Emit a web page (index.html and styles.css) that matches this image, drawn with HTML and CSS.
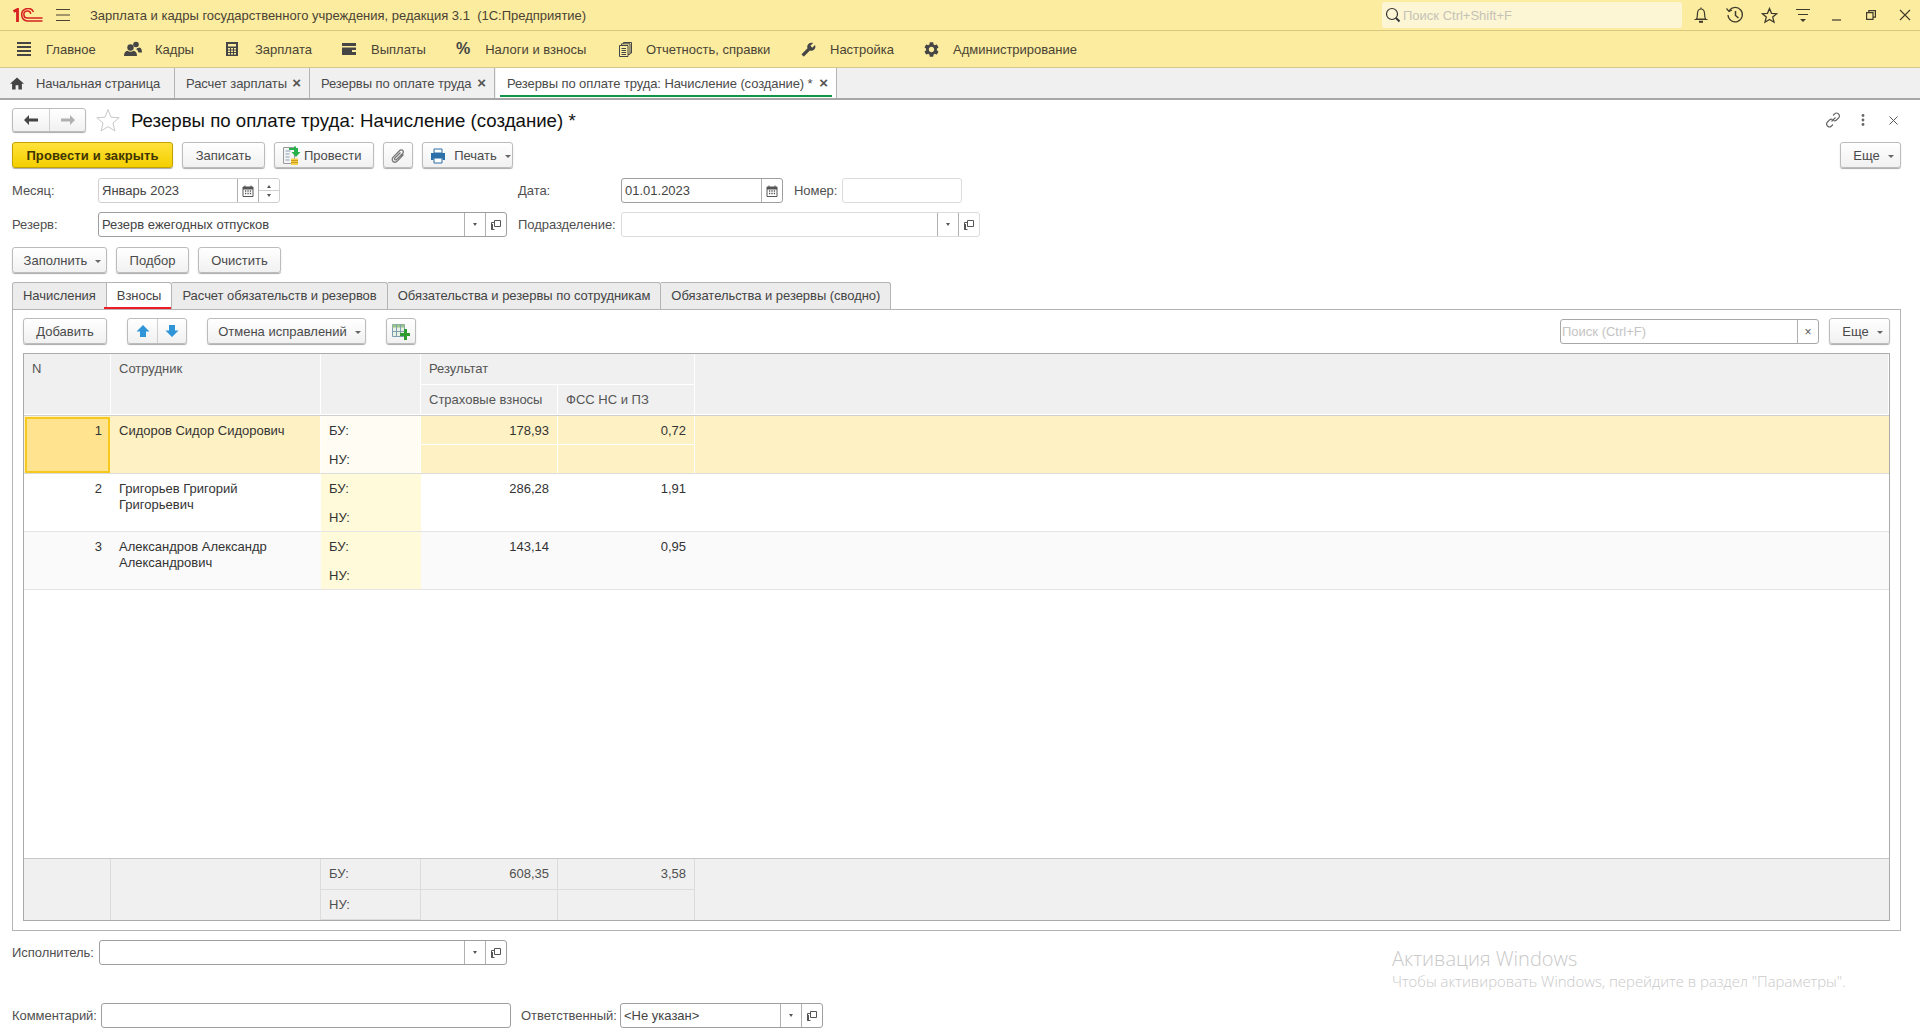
FILE: index.html
```html
<!DOCTYPE html>
<html lang="ru">
<head>
<meta charset="utf-8">
<title>Резервы по оплате труда</title>
<link rel="stylesheet" href="styles.css">
</head>
<body>
<svg class="defs" width="0" height="0">
  <symbol id="open" viewBox="0 0 12 12"><path d="M4.5 1.500h6v6h-6zM4.500 3.500H1.500v7h1V5M1.500 10.500h3" fill="none" stroke="#555" stroke-width="1"/></symbol>
  <symbol id="cal" viewBox="0 0 12 12"><path d="M1 2h10v9.500H1z" fill="#fff" stroke="#555"/><path d="M1 2h10v2.500H1z" fill="#555"/><path d="M3 0.500v2M9 0.500v2" stroke="#555"/><path d="M3 6h1.300M5.400 6h1.300M7.800 6h1.300M3 8.500h1.300M5.400 8.500h1.300M7.800 8.500h1.300" stroke="#555" stroke-width="1.300"/></symbol>
</svg>

<header class="titlebar">
  <svg class="logo" width="30" height="14" viewBox="0 0 30 14" fill="none" stroke="#d7201f"><path d="M0.500 3.500 4.500 1.500V14" stroke-width="2.800"/><path d="M20.500 4A6.200 6.200 0 1 0 14.500 12.900H29.500" stroke-width="1.500"/><path d="M17.800 5.800A3.500 3.500 0 1 0 14.500 10H29.500" stroke-width="1.500"/></svg>
  <svg class="burger" width="14" height="12" viewBox="0 0 14 12" stroke="#4a4334"><path d="M0 .5h14M0 6h14M0 11.500h14"/></svg>
  <span class="apptitle">Зарплата и кадры государственного учреждения, редакция 3.1  (1С:Предприятие)</span>
  <div class="globalsearch">
    <svg width="16" height="16" viewBox="0 0 16 16" fill="none" stroke="#333"><circle cx="7" cy="7" r="5.500" stroke-width="1.200"/><path d="M11 11l3.500 3.500" stroke-width="2"/></svg>
    <span>Поиск Ctrl+Shift+F</span>
  </div>
  <div class="sysicons">
    <svg width="16" height="18" viewBox="0 0 16 18" fill="none" stroke="#3f3a2b" stroke-width="1.200"><path d="M8 1.500v1.500M3.500 13c1.200-2 .8-4 1-6S6 3 8 3s3.300 2 3.500 4 0 4 1 6zM1.500 13.500h13"/><path d="M6 15.800h4" stroke-width="2"/></svg>
    <svg width="18" height="18" viewBox="0 0 18 18" fill="none" stroke="#3f3a2b" stroke-width="1.200"><path d="M3 5A7.200 7.200 0 1 1 2 9"/><path d="M.500 2.500 3 5.500 6 4"/><path d="M9.500 5v4.500l3 2.500" stroke-width="1.500"/></svg>
    <svg width="17" height="17" viewBox="0 0 17 17" fill="none" stroke="#3f3a2b" stroke-width="1.300"><path d="M8.500 1.500l2 4.800 5.200.4-4 3.400 1.300 5.100-4.500-2.800L4 15.200l1.300-5.100-4-3.400 5.200-.4z"/></svg>
    <svg width="16" height="16" viewBox="0 0 16 16" fill="none" stroke="#3f3a2b"><path d="M1 2.500h14M3 7.500h10"/><path d="M5 12h6l-3 3z" fill="#3f3a2b" stroke="none"/></svg>
    <svg width="10" height="16" viewBox="0 0 10 16" stroke="#3f3a2b"><path d="M0 13h9" stroke-width="1.200"/></svg>
    <svg width="10" height="10" viewBox="0 0 10 10" fill="none" stroke="#3f3a2b" stroke-width="1.200"><path d="M.600 2.600h6.400v6.800H.600zM2.800 2.500V.600h6.600v6.500H7"/></svg>
    <svg width="12" height="12" viewBox="0 0 12 12" stroke="#3f3a2b" stroke-width="1.100"><path d="M1 1l10 10M11 1 1 11"/></svg>
  </div>
</header>

<nav class="menubar">
  <a class="mi mi-main"><svg width="14" height="14" viewBox="0 0 14 14" fill="#454545"><path d="M0 0h14v2H0zM0 4h14v2H0zM0 8h14v2H0zM0 12h14v2H0z"/></svg><span>Главное</span></a>
  <a class="mi mi-staff"><svg width="18" height="16" viewBox="0 0 18 16" fill="#454545"><circle cx="6.500" cy="6.500" r="3.200"/><path d="M0 15c0-3.500 1.500-5 3.500-5.300 1.500 1.300 4.500 1.300 6 0 2 .3 3.500 1.800 3.500 5.300z"/><circle cx="12" cy="3.500" r="2.800"/><path d="M13.500 7c1 .1 1.800-.2 2-.4C17 7 18 8.500 18 11.500h-3.500C14 9.500 13 8.500 12 8.200z"/></svg><span>Кадры</span></a>
  <a class="mi mi-pay"><svg width="12" height="14" viewBox="0 0 12 14"><path d="M0 0h12v14H0z" fill="#454545"/><path d="M2 2h8v2.500H2zM2 6h2v1.500H2zM5 6h2v1.500H5zM8 6h2v1.500H8zM2 8.500h2V10H2zM5 8.500h2V10H5zM8 8.500h2V10H8zM2 11h2v1.500H2zM5 11h2v1.500H5zM8 11h2v1.500H8z" fill="#fbeca0"/></svg><span>Зарплата</span></a>
  <a class="mi mi-out"><svg width="14" height="12" viewBox="0 0 14 12"><path d="M0 0h14v12H0z" fill="#454545"/><path d="M0 3h14v1.500H0z" fill="#fbeca0"/><path d="M10 7h4v2h-4z" fill="#fbeca0"/></svg><span>Выплаты</span></a>
  <a class="mi mi-tax"><b class="pct">%</b><span>Налоги и взносы</span></a>
  <a class="mi mi-rep"><svg width="13" height="15" viewBox="0 0 13 15" fill="none" stroke="#454545"><path d="M.500 3.500h8.500v11H.500z" fill="#fbeca0"/><path d="M2.500 3.500V1.800h8.500v10.500H9M4.500 1.800V.500h8v10.500H11M2.500 6.500h4.500M2.500 8.500h4.500M2.500 10.500h4.500M2.500 12.500h4.500"/></svg><span>Отчетность, справки</span></a>
  <a class="mi mi-set"><svg width="15" height="15" viewBox="0 0 24 24" fill="#454545"><path transform="matrix(-1 0 0 1 24 0)" d="M22.700 19l-9.100-9.100c.9-2.300.4-5-1.500-6.900-2-2-5-2.400-7.400-1.300L9 6 6 9 1.600 4.700C.4 7.100.9 10.100 2.900 12.100c1.900 1.900 4.600 2.400 6.900 1.500l9.100 9.100c.4.400 1 .4 1.400 0l2.300-2.300c.5-.4.5-1.100.1-1.400z"/></svg><span>Настройка</span></a>
  <a class="mi mi-adm"><svg width="15" height="15" viewBox="2 2 20 20" fill="#454545"><path d="M19.140 12.940c.04-.3.06-.61.06-.94 0-.32-.02-.64-.07-.94l2.030-1.580c.18-.14.23-.41.12-.61l-1.920-3.320c-.12-.22-.37-.29-.59-.22l-2.390.96c-.5-.38-1.030-.7-1.620-.94l-.36-2.540c-.04-.24-.24-.41-.48-.41h-3.840c-.24 0-.43.17-.47.41l-.36 2.540c-.59.24-1.130.57-1.620.94l-2.390-.96c-.22-.08-.47 0-.59.22L2.740 8.870c-.12.21-.08.47.12.61l2.030 1.580c-.05.3-.09.63-.09.94s.02.64.07.94l-2.030 1.580c-.18.14-.23.41-.12.61l1.920 3.320c.12.22.37.29.59.22l2.390-.96c.5.38 1.030.7 1.620.94l.36 2.540c.05.24.24.41.48.41h3.840c.24 0 .44-.17.47-.41l.36-2.540c.59-.24 1.130-.56 1.620-.94l2.390.96c.22.08.47 0 .59-.22l1.920-3.320c.12-.22.07-.47-.12-.61l-2.010-1.580zM12 15.600c-1.980 0-3.600-1.620-3.600-3.600s1.620-3.600 3.600-3.600 3.600 1.620 3.600 3.600-1.620 3.600-3.600 3.600z"/></svg><span>Администрирование</span></a>
</nav>

<div class="opentabs">
  <a class="otab otab-home"><svg width="14" height="13" viewBox="2 3 20 17" fill="#444"><path d="M10 20v-6h4v6h5v-8h3L12 3 2 12h3v8z"/></svg><span>Начальная страница</span></a>
  <a class="otab otab-pay"><span>Расчет зарплаты</span><i class="x">×</i></a>
  <a class="otab otab-res"><span>Резервы по оплате труда</span><i class="x">×</i></a>
  <a class="otab otab-active"><span>Резервы по оплате труда: Начисление (создание) *</span><i class="x">×</i></a>
</div>

<main class="form">
  <div class="head">
    <div class="btngroup nav">
      <button class="seg"><svg width="14" height="10" viewBox="0 0 14 10" fill="#444"><path d="M0 5l5-5v3.500h9v3H5V10z"/></svg></button>
      <button class="seg"><svg width="14" height="10" viewBox="0 0 14 10" fill="#b0b0b0"><path d="M14 5 9 0v3.500H0v3h9V10z"/></svg></button>
    </div>
    <svg class="favstar" width="24" height="24" viewBox="0 0 24 24" fill="#fff" stroke="#c8c8c8"><path d="M12 1.500l3 7.700 8.200.5-6.300 5.300 2 8-6.900-4.400L5.100 23l2-8L.8 9.700 9 9.200z"/></svg>
    <h1>Резервы по оплате труда: Начисление (создание) *</h1>
    <div class="headicons">
      <svg width="16" height="16" viewBox="0 0 16 16" fill="none" stroke="#666" stroke-width="1.100"><path d="M6.500 9.500l4-4M8 3.500l1.500-1.500a2.800 2.800 0 0 1 4 4L11.500 8a2.800 2.800 0 0 1-3 .6M8 12.500 6.500 14a2.800 2.800 0 0 1-4-4L4.500 8a2.800 2.800 0 0 1 3-.6"/></svg>
      <svg width="4" height="12" viewBox="0 0 4 12" fill="#666"><circle cx="2" cy="1.500" r="1.400"/><circle cx="2" cy="6" r="1.400"/><circle cx="2" cy="10.500" r="1.400"/></svg>
      <svg width="9" height="9" viewBox="0 0 9 9" stroke="#555"><path d="M.5.5l8 8M8.500.5l-8 8"/></svg>
    </div>
  </div>

  <div class="toolbar">
    <button class="btn primary w161">Провести и закрыть</button>
    <button class="btn w83">Записать</button>
    <button class="btn w100 iconleft">
      <svg width="20" height="20" viewBox="0 0 20 20"><path d="M1.500 1.500h11v16h-11z" fill="#f4f4f4" stroke="#9a9a9a"/><path d="M3.500 5h5M3.500 8h4M3.500 11h4M3.500 14h4" stroke="#8aa0b8"/><path d="M7 2h5V0.500h2V2h0l2 0v4h2.500L14 11 9.500 6H12V4H7z" fill="#27b14a"/><path d="M9 12.500h7v6.500H9z" fill="#f5cf47"/><path d="M9 14.500h7M9 16.500h7" stroke="#c79b1e"/></svg>
      <span>Провести</span>
    </button>
    <button class="btn w30"><svg width="16" height="16" viewBox="0 0 16 16" fill="none" stroke="#777" stroke-width="1.300"><path d="M13.500 6.500 7.500 12.800c-1.500 1.500-3.300 1.700-4.500.6s-1-3 .4-4.500L9.500 2.800c1-1 2.300-1.200 3.200-.3s.7 2.200-.3 3.200L6.600 11.400c-.6.600-1.300.7-1.800.2s-.3-1.200.3-1.800L10.500 4.500"/></svg></button>
    <button class="btn w91 dd">
      <svg width="16" height="16" viewBox="0 0 16 16"><path d="M4 1h8v4H4z" fill="#fff" stroke="#2d6fa8"/><path d="M1 5h14v7h-2.500v-2h-9v2H1z" fill="#2d6fa8"/><path d="M4 10h8v5H4z" fill="#fff" stroke="#2d6fa8"/></svg>
      <span>Печать</span><i class="caret"></i>
    </button>
    <button class="btn more dd">Еще<i class="caret"></i></button>
  </div>

  <div class="frow r1">
    <label class="lbl w86">Месяц:</label>
    <div class="field w182"><span class="val">Январь 2023</span><span class="fb"><svg width="12" height="12"><use href="#cal"/></svg></span><span class="fb spin"><i class="tup"></i><i class="tdn"></i></span></div>
    <label class="lbl w103 ml238">Дата:</label>
    <div class="field w162 dark"><span class="val">01.01.2023</span><span class="fb"><svg width="12" height="12"><use href="#cal"/></svg></span></div>
    <label class="lbl w48 ml11">Номер:</label>
    <div class="field w120 light"><span class="val"></span></div>
  </div>
  <div class="frow r2">
    <label class="lbl w86">Резерв:</label>
    <div class="field w409 dark"><span class="val">Резерв ежегодных отпусков</span><span class="fb"><i class="tdn"></i></span><span class="fb"><svg width="12" height="12"><use href="#open"/></svg></span></div>
    <label class="lbl w103 ml11">Подразделение:</label>
    <div class="field w359 light"><span class="val"></span><span class="fb"><i class="tdn"></i></span><span class="fb"><svg width="12" height="12"><use href="#open"/></svg></span></div>
  </div>
  <div class="toolbar r3">
    <button class="btn w95 dd">Заполнить<i class="caret"></i></button>
    <button class="btn w73">Подбор</button>
    <button class="btn w83">Очистить</button>
  </div>

  <div class="doctabs">
    <a class="dtab">Начисления</a>
    <a class="dtab active">Взносы</a>
    <a class="dtab">Расчет обязательств и резервов</a>
    <a class="dtab">Обязательства и резервы по сотрудникам</a>
    <a class="dtab">Обязательства и резервы (сводно)</a>
  </div>

  <section class="panel">
    <div class="ptools">
      <button class="btn w84">Добавить</button>
      <div class="btngroup updown">
        <button class="seg"><svg width="14" height="14" viewBox="0 0 14 14" fill="#2f95d8"><path d="M7 1l6.500 6.500H10V13H4V7.500H.5z"/></svg></button>
        <button class="seg"><svg width="14" height="14" viewBox="0 0 14 14" fill="#2f95d8"><path d="M7 13l6.500-6.500H10V1H4v5.500H.5z"/></svg></button>
      </div>
      <button class="btn w159 dd">Отмена исправлений<i class="caret"></i></button>
      <button class="btn w30"><svg width="18" height="17" viewBox="0 0 18 17"><path d="M.5 1.500h12v12H.5z" fill="#e8f2e4" stroke="#7f9fb0"/><path d="M.5 1.500h12v3H.5z" fill="#9cc58b"/><path d="M4.500 1.500v12M8.500 1.500v12M.5 8.500h12" stroke="#7f9fb0"/><path d="M12 6h3v4h3v3h-3v4h-3v-4H8v-3h4z" fill="#2e9c2e"/></svg></button>
      <div class="field tsearch"><span class="val ph">Поиск (Ctrl+F)</span><span class="fb"><i class="x sm">×</i></span></div>
      <button class="btn more inner dd">Еще<i class="caret"></i></button>
    </div>

    <div class="tbl">
      <div class="thead">
        <div class="c h rs2">N</div>
        <div class="c h rs2">Сотрудник</div>
        <div class="c h rs2"></div>
        <div class="c h cs2">Результат</div>
        <div class="c h rs2 end"></div>
        <div class="c h">Страховые взносы</div>
        <div class="c h">ФСС НС и ПЗ</div>
      </div>

      <div class="trow sel">
        <div class="c num current rs2">1</div>
        <div class="c rs2">Сидоров Сидор Сидорович</div>
        <div class="c ledger pale">БУ:</div>
        <div class="c val-r line">178,93</div>
        <div class="c val-r line">0,72</div>
        <div class="c rs2 end"></div>
        <div class="c ledger pale">НУ:</div>
        <div class="c"></div>
        <div class="c"></div>
      </div>
      <div class="trow">
        <div class="c num rs2">2</div>
        <div class="c rs2">Григорьев Григорий Григорьевич</div>
        <div class="c ledger">БУ:</div>
        <div class="c val-r">286,28</div>
        <div class="c val-r">1,91</div>
        <div class="c rs2 end"></div>
        <div class="c ledger">НУ:</div>
        <div class="c"></div>
        <div class="c"></div>
      </div>
      <div class="trow alt">
        <div class="c num rs2">3</div>
        <div class="c rs2">Александров Александр Александрович</div>
        <div class="c ledger">БУ:</div>
        <div class="c val-r">143,14</div>
        <div class="c val-r">0,95</div>
        <div class="c rs2 end"></div>
        <div class="c ledger">НУ:</div>
        <div class="c"></div>
        <div class="c"></div>
      </div>

      <div class="tspace"></div>

      <div class="tfoot">
        <div class="c rs2"></div>
        <div class="c rs2"></div>
        <div class="c ledger">БУ:</div>
        <div class="c val-r">608,35</div>
        <div class="c val-r">3,58</div>
        <div class="c rs2 end"></div>
        <div class="c ledger">НУ:</div>
        <div class="c"></div>
        <div class="c"></div>
      </div>
    </div>
  </section>

  <div class="frow r4">
    <label class="lbl w87">Исполнитель:</label>
    <div class="field w408 dark"><span class="val"></span><span class="fb"><i class="tdn"></i></span><span class="fb"><svg width="12" height="12"><use href="#open"/></svg></span></div>
  </div>
  <div class="frow r5">
    <label class="lbl w89">Комментарий:</label>
    <div class="field w410 dark"><span class="val"></span></div>
    <label class="lbl w99 ml10">Ответственный:</label>
    <div class="field w203 dark"><span class="val">&lt;Не указан&gt;</span><span class="fb"><i class="tdn"></i></span><span class="fb"><svg width="12" height="12"><use href="#open"/></svg></span></div>
  </div>
</main>

<aside class="watermark">
  <div class="wm1">Активация Windows</div>
  <div class="wm2">Чтобы активировать Windows, перейдите в раздел "Параметры".</div>
</aside>
</body>
</html>
```

FILE: styles.css
```css
* { box-sizing: border-box; }
html, body { margin: 0; height: 1032px; overflow: hidden; }
body {
  position: relative;
  background: #fff;
  color: #4a4a4a;
  font: 13px/16px "Liberation Sans", Arial, sans-serif;
}
.defs { position: absolute; }
button { font: inherit; color: inherit; }
i { font-style: normal; }

/* title bar */
.titlebar {
  display: flex;
  align-items: center;
  height: 31px;
  padding-left: 13px;
  background: #fbeca0;
  border-bottom: 1px solid #d9c77b;
}
.burger { margin-left: 13px; }
.apptitle { margin-left: 20px; padding-top: 1px; color: #4a4334; white-space: pre; }
.globalsearch {
  display: flex;
  align-items: center;
  gap: 2px;
  width: 300px;
  height: 26px;
  margin-left: auto;
  margin-right: 2px;
  padding-left: 3px;
  background: #fdf6d5;
  border-radius: 2px;
  color: #c5c2b5;
}
.globalsearch span { padding-top: 1px; }
.sysicons {
  display: grid;
  grid-auto-flow: column;
  grid-auto-columns: 34px;
  align-items: center;
  justify-items: center;
  margin-right: -2px;
}

/* section menu */
.menubar {
  display: flex;
  align-items: center;
  height: 37px;
  padding-left: 17px;
  background: #fbeca0;
  border-bottom: 1px solid #d2c78e;
  color: #4a4334;
}
.mi { display: flex; align-items: center; flex: none; }
.mi span { padding-top: 1px; }
.mi-main { width: 107px; gap: 15px; }
.mi-staff { width: 102px; gap: 13px; }
.mi-pay { width: 116px; gap: 17px; }
.mi-out { width: 114px; gap: 15px; }
.mi-tax { width: 163px; gap: 15px; }
.mi-rep { width: 182px; gap: 14px; }
.mi-set { width: 123px; gap: 14px; }
.mi-adm { gap: 14px; }
.pct { font-size: 16px; color: #454545; }

/* open windows */
.opentabs {
  display: flex;
  height: 32px;
  background: #f0f0f0;
  border-bottom: 2px solid #a6a6a6;
  letter-spacing: -0.09px;
}
.otab {
  position: relative;
  display: flex;
  flex: none;
  align-items: center;
  gap: 4px;
  padding: 0 8px 0 10px;
  margin-right: 1px;
  border-right: 1px solid #b4b4b4;
  white-space: nowrap;
}
.otab span { padding-top: 1px; }
.otab .x { margin-left: auto; }
.otab-home { width: 175px; gap: 12px; padding-right: 0; }
.otab-pay { width: 134px; }
.otab-res { width: 184px; }
.otab-active {
  width: 341px;
  background: #fff;
  padding-left: 11px;
}
.otab-active::after {
  content: "";
  position: absolute;
  left: 4px;
  right: 4px;
  bottom: 1px;
  height: 2px;
  background: #0f9648;
}
.x { font-size: 15px; font-weight: bold; color: #555; width: 9px; text-align: center; }
.x.sm { font-size: 12px; font-weight: normal; }

/* document form */
.form { padding: 8px 19px 0 12px; }
.head { display: flex; align-items: center; height: 24px; }
.btngroup {
  display: flex;
  height: 26px;
  background: linear-gradient(#fff, #f1f1f1);
  border: 1px solid #bcbcbc;
  border-radius: 3px;
  box-shadow: 0 1px 1px #aaa;
}
.seg {
  display: flex;
  align-items: center;
  justify-content: center;
  padding: 0;
  width: 50%;
  background: none;
  border: 0;
}
.seg + .seg { border-left: 1px solid #d0d0d0; }
.nav { width: 74px; height: 24px; }
.favstar { margin-left: 10px; }
h1 {
  margin: 0 0 0 11px;
  padding-top: 1px;
  font-size: 18.67px;
  line-height: 24px;
  font-weight: normal;
  color: #111;
}
.headicons {
  display: grid;
  grid-auto-flow: column;
  grid-auto-columns: 30px;
  align-items: center;
  justify-items: center;
  margin-left: auto;
  margin-right: -7px;
}

.toolbar { display: flex; gap: 9px; height: 26px; margin-top: 10px; }
.btn {
  display: inline-flex;
  align-items: center;
  justify-content: center;
  gap: 6px;
  height: 26px;
  padding: 1px 0 0 0;
  background: linear-gradient(#fff, #f1f1f1);
  border: 1px solid #bcbcbc;
  border-radius: 3px;
  box-shadow: 0 1px 1px #aaa;
  color: #4a4a4a;
  white-space: nowrap;
}
.btn.iconleft { justify-content: flex-start; gap: 2px; padding-left: 7px; }
.btn.dd { gap: 8px; padding-left: 6px; }
.primary {
  background: linear-gradient(#ffe23a, #f3cf00);
  border-color: #c2a300;
  color: #3f3500;
  font-weight: bold;
  letter-spacing: 0.1px;
}
.caret {
  display: inline-block;
  width: 0;
  height: 0;
  margin-top: 1px;
  border: 3px solid transparent;
  border-top: 3px solid #666;
  border-bottom: 0;
}
.more { width: 61px; margin-left: auto; }
.more.inner { margin-left: 10px; }
.w30 { width: 30px; }
.w73 { width: 73px; }
.w83 { width: 83px; }
.w84 { width: 84px; }
.w91 { width: 91px; }
.w95 { width: 95px; }
.w100 { width: 100px; }
.w159 { width: 159px; }
.w161 { width: 161px; }

/* fields */
.frow { display: flex; align-items: center; height: 25px; }
.r1 { margin-top: 10px; }
.r2 { margin-top: 9px; }
.r3 { margin-top: 10px; }
.r4 { margin-top: 9px; }
.r5 { margin-top: 38px; }
.lbl { flex: none; color: #4f4f4f; white-space: nowrap; letter-spacing: -0.05px; }
.w48 { width: 48px; }
.w86 { width: 86px; }
.w87 { width: 87px; }
.w89 { width: 89px; }
.w99 { width: 99px; }
.w103 { width: 103px; }
.ml10 { margin-left: 10px; }
.ml11 { margin-left: 11px; }
.ml238 { margin-left: 238px; }
.field {
  display: flex;
  flex: none;
  height: 25px;
  background: #fff;
  border: 1px solid #cfcfcf;
  border-radius: 3px;
}
.field.dark { border-color: #9e9e9e; }
.field.light { border-color: #dcdcdc; }
.w120 { width: 120px; }
.w162 { width: 162px; }
.w182 { width: 182px; }
.w203 { width: 203px; }
.w359 { width: 359px; }
.w408 { width: 408px; }
.w409 { width: 409px; }
.w410 { width: 410px; }
.val {
  flex: 1;
  padding: 0 3px;
  line-height: 23px;
  color: #444;
  white-space: nowrap;
}
.ph { color: #c4c4c4; padding: 0 1px; }
.fb {
  flex: none;
  display: flex;
  align-items: center;
  justify-content: center;
  width: 21px;
  border-left: 1px solid #b0b0b0;
}
.spin { flex-direction: column; position: relative; gap: 6px; }
.spin::after {
  content: "";
  position: absolute;
  left: 0;
  right: 0;
  top: 11px;
  border-top: 1px solid #cfcfcf;
}
.tdn, .tup { width: 0; height: 0; border: 2.5px solid transparent; }
.tdn { border-top: 3px solid #555; border-bottom: 0; }
.tup { border-bottom: 3px solid #555; border-top: 0; }

/* form tabs */
.doctabs { display: flex; height: 27px; margin-top: 9px; letter-spacing: -0.04px; }
.dtab {
  display: flex;
  align-items: center;
  padding: 0 10px;
  background: #ececec;
  border: 1px solid #b4b4b4;
  border-left: 0;
  border-bottom: 0;
  border-radius: 0 3px 0 0;
  color: #444;
  white-space: nowrap;
}
.dtab:first-child { border-left: 1px solid #b4b4b4; border-radius: 3px 0 0 0; }
.dtab.active { position: relative; background: #fff; }
.dtab.active::after {
  content: "";
  position: absolute;
  left: -3px;
  right: 0;
  bottom: 0;
  height: 2px;
  background: #ee1c25;
}

.panel {
  height: 622px;
  padding: 8px 10px 0 10px;
  border: 1px solid #b4b4b4;
}
.ptools { display: flex; gap: 20px; height: 26px; align-items: flex-start; }
.updown { width: 60px; }
.tsearch { width: 259px; height: 25px; margin-left: auto; border-color: #a8a8a8; margin-top: 1px; margin-right: -20px; }

/* table */
.tbl {
  display: flex;
  flex-direction: column;
  height: 568px;
  margin-top: 9px;
  border: 1px solid #ababab;
  color: #333;
}
.thead, .trow, .tfoot {
  display: grid;
  grid-template-columns: 87px 210px 100px 137px 137px 1fr;
  flex: none;
}
.c {
  padding: 7px 8px 0 8px;
  border-right: 1px solid transparent;
}
.rs2 { grid-row: span 2; }
.cs2 { grid-column: span 2; }
.end { border-right: 0; }
.thead {
  grid-template-rows: 31px 30px;
  border-bottom: 1px solid #cfcfcf;
  color: #555;
}
.h {
  background: #f0f0f0;
  border-right: 1px solid #fff;
  border-bottom: 1px solid #fff;
}
.trow {
  grid-template-rows: 29px 28px;
  border-bottom: 1px solid #e4e4e4;
}
.alt { background: #fafafa; }
.num { text-align: right; }
.ledger { background: #fffad9; }
.val-r { text-align: right; }
.sel { background: #fef1c4; border-bottom-color: #dcdcdc; }
.sel .c { border-right-color: #fff; }
.sel .val-r { border-bottom: 1px solid #fff; }
.sel .end { border-right: 0; }
.ledger.pale { background: #fffdf3; }
.trow .current {
  background: #ffe38e;
  border: 2px solid #f7c81d;
  padding: 4px 6px 0 0;
  margin: 1px 1px 0 1px;
}
.tspace { flex: 1; }
.tfoot {
  grid-template-rows: 31px 30px;
  background: #f0f0f0;
  border-top: 1px solid #c8c8c8;
  color: #4f4f4f;
}
.tfoot .c { border-right: 1px solid #dcdcdc; }
.tfoot .val-r { border-bottom: 1px solid #dcdcdc; }
.tfoot .ledger { background: none; border-bottom: 1px solid #dcdcdc; }
.tfoot .end { border-right: 0; }

/* windows activation overlay */
.watermark {
  position: absolute;
  left: 1392px;
  top: 946px;
  color: #c9c9c9;
  font-family: "Open Sans", sans-serif;
  font-weight: 300;
  white-space: nowrap;
}
.wm1 { font-size: 20px; line-height: 25px; }
.wm2 { font-size: 14.9px; line-height: 20px; }
```
